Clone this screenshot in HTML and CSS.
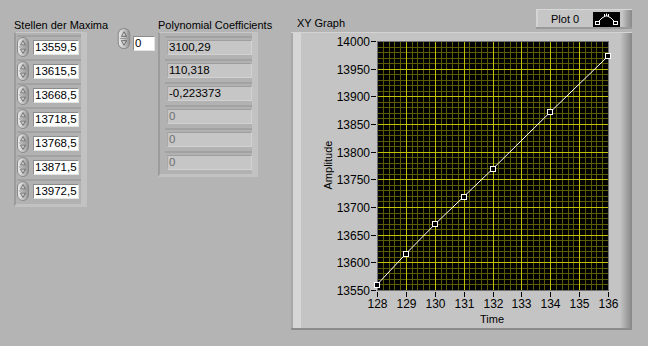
FILE: index.html
```html
<!DOCTYPE html>
<html lang="de">
<head>
  <meta charset="UTF-8" />
  <title>Polynomial Fit</title>
  <link rel="stylesheet" href="styles.css">
</head>
<body>
  <svg class="defs" width="0" height="0">
    <defs>
      <linearGradient id="spin-fill" x1="0" x2="1" y1="0" y2="0">
        <stop offset="0" stop-color="#ececec" />
        <stop offset="0.5" stop-color="#c8c8c8" />
        <stop offset="1" stop-color="#8e8e8e" />
      </linearGradient>
      <symbol id="spinner" viewBox="0 0 12 20">
        <rect x="0.5" y="0.5" width="11" height="19" rx="5.5" fill="url(#spin-fill)" stroke="#8a8a8a" />
        <line x1="2" x2="10" y1="10" y2="10" stroke="#9a9a9a" />
        <path d="M6 3.5 L3.5 8 H8.5 Z" fill="none" stroke="#606060" stroke-width="0.8" />
        <path d="M6 16.5 L3.5 12 H8.5 Z" fill="none" stroke="#606060" stroke-width="0.8" />
      </symbol>
    </defs>
  </svg>

  <div class="panel">
    <div class="control maxima">
      <div class="label">Stellen der Maxima</div>
      <div class="array">
        <div class="cell"><svg class="spin"><use href="#spinner" /></svg><span class="num">13559,5</span></div>
        <div class="cell"><svg class="spin"><use href="#spinner" /></svg><span class="num">13615,5</span></div>
        <div class="cell"><svg class="spin"><use href="#spinner" /></svg><span class="num">13668,5</span></div>
        <div class="cell"><svg class="spin"><use href="#spinner" /></svg><span class="num">13718,5</span></div>
        <div class="cell"><svg class="spin"><use href="#spinner" /></svg><span class="num">13768,5</span></div>
        <div class="cell"><svg class="spin"><use href="#spinner" /></svg><span class="num">13871,5</span></div>
        <div class="cell"><svg class="spin"><use href="#spinner" /></svg><span class="num">13972,5</span></div>
      </div>
    </div>

    <div class="control coeffs">
      <div class="index">
        <svg class="spin big"><use href="#spinner" /></svg>
        <span class="num idx">0</span>
      </div>
      <div class="coeff-block">
        <div class="label">Polynomial Coefficients</div>
        <div class="array out-array">
          <div class="cell"><span class="out">3100,29</span></div>
          <div class="cell"><span class="out">110,318</span></div>
          <div class="cell"><span class="out">-0,223373</span></div>
          <div class="cell"><span class="out off">0</span></div>
          <div class="cell"><span class="out off">0</span></div>
          <div class="cell"><span class="out off">0</span></div>
        </div>
      </div>
    </div>

    <div class="control graph">
      <div class="graph-head">
        <span class="label title">XY Graph</span>
        <div class="legend">
          <span>Plot 0</span>
          <svg class="legend-icon" width="27" height="15" viewBox="0 0 27 15">
            <rect width="27" height="15" fill="#000" />
            <polyline points="4.5,10.5 9,6 13.5,3.5 18,6 22.5,10.5" fill="none" stroke="#fff" />
            <rect x="2.5" y="9.5" width="4" height="3" fill="#000" stroke="#fff" />
            <rect x="20.5" y="9.5" width="4" height="3" fill="#000" stroke="#fff" />
            <path d="M11.5 2 V4.5 M13.5 1.5 V4.5 M15.5 2 V4.5" stroke="#fff" />
          </svg>
        </div>
      </div>
      <div class="graph-frame">
        <svg id="plot" width="341" height="298"></svg>
      </div>
    </div>
  </div>

  <script>
    const NS = 'http://www.w3.org/2000/svg';
    const plot = document.getElementById('plot');

    // plot area inside the frame
    const L = 86, R = 317, T = 9, B = 258;
    const sx = x => L + (x - 128) * (R - L) / 8;
    const sy = y => B - (y - 13550) * (B - T) / 450;

    function add(tag, attrs, text) {
      const el = document.createElementNS(NS, tag);
      for (const k in attrs) el.setAttribute(k, attrs[k]);
      if (text !== undefined) el.textContent = text;
      plot.appendChild(el);
      return el;
    }

    add('rect', { x: L, y: T, width: R - L + 1, height: B - T + 1, fill: '#000' });

    // grid, minor lines first so the major ones sit on top
    for (const major of [false, true]) {
      for (let i = 0; i <= 40; i++) {
        if ((i % 5 === 0) !== major) continue;
        const x = Math.round(L + i * (R - L) / 40) + 0.5;
        add('line', { x1: x, x2: x, y1: T, y2: B + 1, stroke: major ? '#c0c000' : '#5c5c00' });
      }
      for (let j = 0; j <= 45; j++) {
        if ((j % 5 === 0) !== major) continue;
        const y = Math.round(T + j * (B - T) / 45) + 0.5;
        add('line', { x1: L, x2: R + 1, y1: y, y2: y, stroke: major ? '#c0c000' : '#5c5c00' });
      }
    }
    add('rect', { x: L + 0.5, y: T + 0.5, width: R - L, height: B - T, fill: 'none', stroke: '#707070' });

    // y axis
    for (let v = 13550; v <= 14000; v += 50) {
      const y = Math.round(sy(v)) + 0.5;
      add('line', { x1: L - 6, x2: L - 1, y1: y, y2: y, stroke: '#000' });
      add('text', { x: L - 7, y: y + 4, 'text-anchor': 'end', class: 'tick' }, v);
    }
    // x axis
    for (let v = 128; v <= 136; v++) {
      const x = Math.round(sx(v)) + 0.5;
      add('line', { x1: x, x2: x, y1: B + 2, y2: B + 7, stroke: '#000' });
      add('text', { x: x, y: B + 18, 'text-anchor': 'middle', class: 'tick' }, v);
    }
    add('text', { x: 201, y: 291, 'text-anchor': 'middle', class: 'axis-name' }, 'Time');
    add('text', { x: 41, y: 133, 'text-anchor': 'middle', class: 'axis-name', transform: 'rotate(-90 41 133)' }, 'Amplitude');

    // Plot 0
    const data = [[128, 13559.5], [129, 13615.5], [130, 13668.5], [131, 13718.5],
                  [132, 13768.5], [134, 13871.5], [136, 13972.5]];
    add('polyline', {
      points: data.map(([x, y]) => sx(x) + ',' + sy(y)).join(' '),
      fill: 'none', stroke: '#fff'
    });
    for (const [x, y] of data) {
      const px = Math.round(sx(x)), py = Math.round(sy(y));
      add('rect', { x: px - 2.5, y: py - 2.5, width: 5, height: 5, fill: '#000', stroke: '#fff' });
    }
  </script>
</body>
</html>
```

FILE: styles.css
```css
body {
  margin: 0;
  width: 648px;
  height: 346px;
  overflow: hidden;
  background: #b4b4b4;
  font-family: "Liberation Sans", Arial, sans-serif;
  font-size: 11px;
  color: #000;
}
.defs {
  position: absolute;
}
.panel {
  display: flex;
  align-items: flex-start;
}
.control {
  flex: none;
}
.label {
  height: 14px;
  line-height: 14px;
  white-space: nowrap;
}

/* arrays */
.array {
  box-sizing: border-box;
  background: #b2b2b2;
  border-left: 2px solid #9c9c9c;
  border-top: 1px solid #c8c8c8;
  border-right: 6px solid #c2c2c2;
  border-bottom: 3px solid #c2c2c2;
}
.cell {
  display: flex;
  align-items: center;
  box-shadow: inset 0 2px #a2a2a2;
}
.num {
  box-sizing: border-box;
  height: 15px;
  line-height: 13px;
  padding-left: 1px;
  font-size: 11.5px;
  background: #fff;
  border: 1px solid;
  border-color: #8c8c8c #e4e4e4 #e4e4e4 #8c8c8c;
  white-space: nowrap;
  overflow: hidden;
}
.spin {
  width: 12px;
  height: 20px;
  flex: none;
}
.spin.big {
  width: 14px;
  height: 21px;
}

.maxima {
  width: 73px;
  margin: 18px 0 0 14px;
}
.maxima .array {
  width: 73px;
  height: 175px;
  padding: 2px 0 0 1px;
}
.maxima .cell {
  height: 24px;
  gap: 4px;
}
.maxima .num {
  width: 46px;
  flex: none;
}

.coeffs {
  display: flex;
  align-items: flex-start;
  margin: 18px 0 0 30px;
}
.index {
  display: flex;
  align-items: flex-start;
  gap: 2px;
  margin: 10px 3px 0 0;
}
.num.idx {
  width: 22px;
  margin-top: 8px;
}
.coeff-block {
  width: 100px;
}
.out-array {
  width: 100px;
  height: 145px;
  padding: 3px 0 0 5px;
  border-left-width: 2px;
}
.out-array .cell {
  height: 23px;
  padding-left: 2px;
}
.out {
  box-sizing: border-box;
  width: 86px;
  height: 15px;
  line-height: 13px;
  padding-left: 1px;
  font-size: 11.5px;
  background: #c6c6c6;
  border: 1px solid;
  border-color: #9e9e9e #d2d2d2 #d2d2d2 #a8a8a8;
}
.out.off {
  color: #707070;
}

/* graph */
.graph {
  margin: 9px 0 0 33px;
  width: 341px;
}
.graph-head {
  display: flex;
  justify-content: space-between;
  align-items: flex-end;
  height: 23px;
}
.title {
  padding-left: 6px;
  margin-bottom: 2px;
}
.legend {
  box-sizing: border-box;
  width: 96px;
  height: 20px;
  margin-bottom: 3px;
  display: flex;
  align-items: flex-start;
  gap: 14px;
  padding: 3px 0 0 15px;
  line-height: 14px;
  background: linear-gradient(to right, #d4d4d4 0 2px, #c6c6c6 2px calc(100% - 10px), #a4a4a4 calc(100% - 5px), #8a8a8a 100%);
  box-shadow: inset 0 1px #d8d8d8, inset 0 -2px #9a9a9a;
}
.legend-icon {
  display: block;
  flex: none;
}
.graph-frame {
  width: 341px;
  height: 298px;
  background: linear-gradient(to right, #a8a8a8 0 2px, #d6d6d6 2px 10px, #c4c4c4 10px calc(100% - 12px), #b0b0b0 calc(100% - 8px), #868686 100%);
  box-shadow: inset 0 1px #d4d4d4, inset 0 -2px #8c8c8c;
}
#plot {
  display: block;
}
.tick {
  font-size: 12px;
}
.axis-name {
  font-size: 11px;
}
```
